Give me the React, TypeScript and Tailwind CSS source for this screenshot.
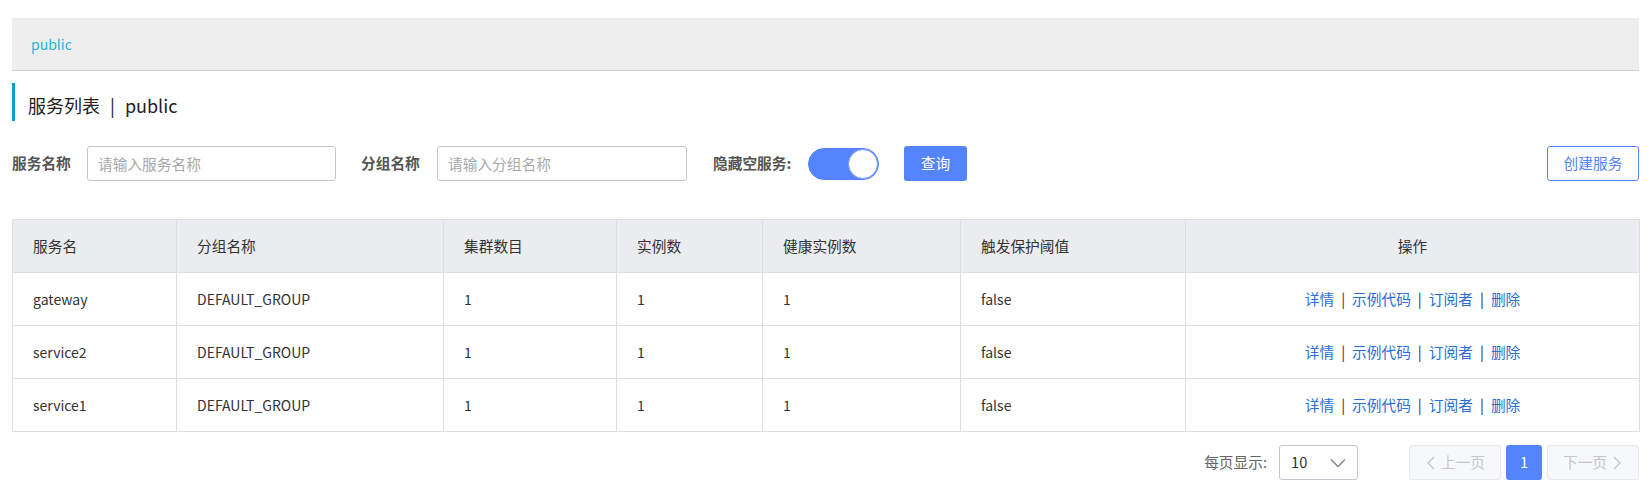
import React from "react";

const services = [
  { name: "gateway", group: "DEFAULT_GROUP", clusters: 1, instances: 1, healthy: 1, protect: "false" },
  { name: "service2", group: "DEFAULT_GROUP", clusters: 1, instances: 1, healthy: 1, protect: "false" },
  { name: "service1", group: "DEFAULT_GROUP", clusters: 1, instances: 1, healthy: 1, protect: "false" },
];

const columns = [
  { title: "服务名", width: "164px" },
  { title: "分组名称", width: "267px" },
  { title: "集群数目", width: "173px" },
  { title: "实例数", width: "146px" },
  { title: "健康实例数", width: "198px" },
  { title: "触发保护阈值", width: "225px" },
  { title: "操作", width: "454px" },
];

const ChevronLeft = () => (
  <svg width="12" height="14" viewBox="0 0 12 14" fill="none">
    <path d="M9 1L3 7l6 6" stroke="currentColor" strokeWidth="1.4" />
  </svg>
);

const ChevronRight = () => (
  <svg width="12" height="14" viewBox="0 0 12 14" fill="none">
    <path d="M3 1l6 6-6 6" stroke="currentColor" strokeWidth="1.4" />
  </svg>
);

const ChevronDown = () => (
  <svg width="16" height="10" viewBox="0 0 16 10" fill="none">
    <path d="M1 1.5l7 7 7-7" stroke="#888" strokeWidth="1.5" />
  </svg>
);

const App: React.FC = () => {
  return (
    <div
      className="min-h-[488px] bg-white px-[12px] pt-[18px] text-[14px] text-[#333]"
      style={{ fontFamily: '"Noto Sans CJK SC", "Noto Sans", sans-serif' }}
    >
      {/* Namespace bar */}
      <div className="flex h-[53px] items-center border-b border-[#d0d0d0] bg-[#eeeeee] pl-[19px]">
        <span className="text-[14px] text-[#1eb3de]">public</span>
      </div>

      {/* Page title */}
      <div className="mt-[12px] flex h-[38px] items-center border-l-[3px] border-[#0c9dd6] pl-[13px] pt-[6px] text-[18px] text-[#222]">
        服务列表<span className="mx-[10px]">|</span>public
      </div>

      {/* Filter row */}
      <div className="mt-[25px] flex h-[35px] items-center">
        <span className="w-[60px] whitespace-nowrap text-[14.7px] font-bold text-[#555]">服务名称</span>
        <input
          className="ml-[15px] h-[35px] w-[249px] rounded-[3px] border border-[#c4c6cf] px-[10px] text-[14.7px] outline-none placeholder:text-[#a8a8a8]"
          placeholder="请输入服务名称"
        />
        <span className="ml-[25px] w-[60px] whitespace-nowrap text-[14.7px] font-bold text-[#555]">分组名称</span>
        <input
          className="ml-[16px] h-[35px] w-[250px] rounded-[3px] border border-[#c4c6cf] px-[10px] text-[14.7px] outline-none placeholder:text-[#a8a8a8]"
          placeholder="请输入分组名称"
        />
        <span className="ml-[26px] w-[82px] whitespace-nowrap text-[14.7px] font-bold text-[#555]">隐藏空服务:</span>
        <div className="ml-[13px] flex h-[32px] w-[71px] items-center justify-end rounded-full border border-[#5584ff] bg-[#5584ff]">
          <div className="h-[30px] w-[30px] rounded-full border border-[#7b9ffc] bg-white" />
        </div>
        <button className="ml-[25px] h-[35px] w-[63px] rounded-[3px] bg-[#5584ff] text-[14.7px] text-white">
          查询
        </button>
        <div className="flex-1" />
        <button className="h-[35px] w-[92px] rounded-[3px] border border-[#5584ff] bg-white text-[14.7px] text-[#5584ff]">
          创建服务
        </button>
      </div>

      {/* Table */}
      <table className="mt-[38px] w-full table-fixed border-collapse border border-[#dcdee3]">
        <colgroup>
          {columns.map((c) => (
            <col key={c.title} style={{ width: c.width }} />
          ))}
        </colgroup>
        <thead>
          <tr className="h-[53px] bg-[#ebecf0]">
            {columns.map((c, i) => (
              <th
                key={c.title}
                className={`border border-[#dcdee3] px-[20px] text-[14.7px] font-normal text-[#333] ${
                  i === columns.length - 1 ? "text-center" : "text-left"
                }`}
              >
                {c.title}
              </th>
            ))}
          </tr>
        </thead>
        <tbody>
          {services.map((s) => (
            <tr key={s.name} className="h-[53px]">
              <td className="border border-[#dcdee3] px-[20px]">{s.name}</td>
              <td className="border border-[#dcdee3] px-[20px]">{s.group}</td>
              <td className="border border-[#dcdee3] px-[20px]">{s.clusters}</td>
              <td className="border border-[#dcdee3] px-[20px]">{s.instances}</td>
              <td className="border border-[#dcdee3] px-[20px]">{s.healthy}</td>
              <td className="border border-[#dcdee3] px-[20px]">{s.protect}</td>
              <td className="border border-[#dcdee3] px-[20px] text-center text-[14.7px]">
                <a className="text-[#2a6fd6]">详情</a>
                <span className="mx-[7px] text-[#333]">|</span>
                <a className="text-[#2a6fd6]">示例代码</a>
                <span className="mx-[7px] text-[#333]">|</span>
                <a className="text-[#2a6fd6]">订阅者</a>
                <span className="mx-[7px] text-[#333]">|</span>
                <a className="text-[#2a6fd6]">删除</a>
              </td>
            </tr>
          ))}
        </tbody>
      </table>

      {/* Pagination */}
      <div className="mt-[13px] flex items-center justify-end">
        <span className="text-[14.7px] text-[#666]">每页显示:</span>
        <div className="ml-[12px] flex h-[35px] w-[79px] items-center justify-between rounded-[3px] border border-[#c4c6cf] pl-[11px] pr-[11px]">
          <span className="text-[14.7px] text-[#333]">10</span>
          <ChevronDown />
        </div>
        <button className="ml-[51px] flex h-[35px] w-[92px] items-center justify-center gap-[4px] rounded-[3px] border border-[#e6e7eb] bg-[#f7f8fa] text-[14.7px] text-[#c4c6cf]">
          <ChevronLeft />
          上一页
        </button>
        <button className="ml-[5px] h-[35px] w-[36px] rounded-[3px] bg-[#5584ff] text-[14.7px] text-white">
          1
        </button>
        <button className="ml-[5px] flex h-[35px] w-[92px] items-center justify-center gap-[4px] rounded-[3px] border border-[#e6e7eb] bg-[#f7f8fa] text-[14.7px] text-[#c4c6cf]">
          下一页
          <ChevronRight />
        </button>
      </div>
    </div>
  );
};

export default App;
